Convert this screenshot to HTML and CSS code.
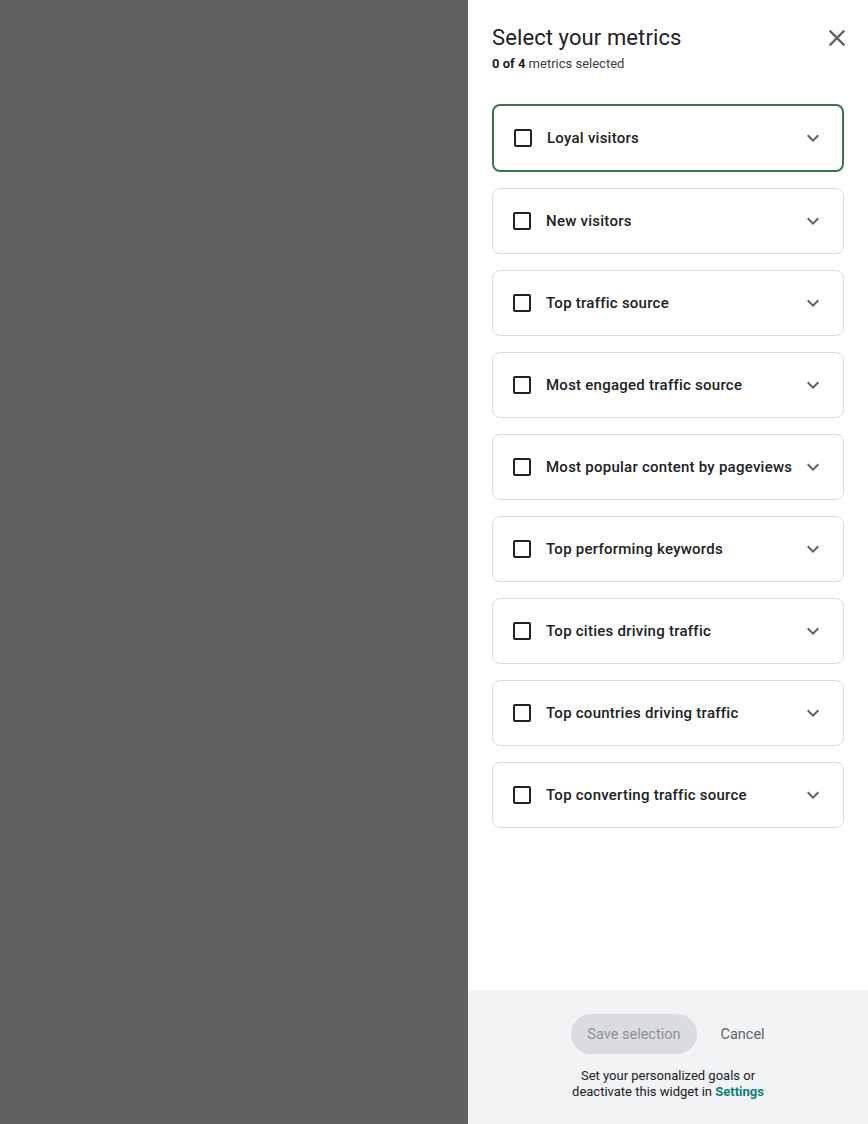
FILE: index.html
```html
<!DOCTYPE html>
<html lang="en">
<head>
<meta charset="utf-8">
<title>Select your metrics</title>
<link rel="stylesheet" href="styles.css">
</head>
<body>
<div class="screen">
  <div class="scrim"></div>
  <aside class="panel">
    <div class="panel-body">
      <header class="head">
        <div class="head-text">
          <h1 class="title">Select your metrics</h1>
          <p class="sub"><b>0 of 4</b> metrics selected</p>
        </div>
        <button class="close" aria-label="Close">
          <svg viewBox="0 0 24 24" width="28" height="28"><path fill="#5f6368" d="M19 6.41L17.59 5 12 10.59 6.41 5 5 6.41 10.59 12 5 17.59 6.41 19 12 13.41 17.59 19 19 17.59 13.41 12z"/></svg>
        </button>
      </header>
      <ul class="list">
        <li class="card focused"><span class="box"></span><span class="label">Loyal visitors</span><svg class="chev" viewBox="0 0 24 24" width="24" height="24"><path d="M16.59 8.59L12 13.17 7.41 8.59 6 10l6 6 6-6z"/></svg></li>
        <li class="card"><span class="box"></span><span class="label">New visitors</span><svg class="chev" viewBox="0 0 24 24" width="24" height="24"><path d="M16.59 8.59L12 13.17 7.41 8.59 6 10l6 6 6-6z"/></svg></li>
        <li class="card"><span class="box"></span><span class="label">Top traffic source</span><svg class="chev" viewBox="0 0 24 24" width="24" height="24"><path d="M16.59 8.59L12 13.17 7.41 8.59 6 10l6 6 6-6z"/></svg></li>
        <li class="card"><span class="box"></span><span class="label">Most engaged traffic source</span><svg class="chev" viewBox="0 0 24 24" width="24" height="24"><path d="M16.59 8.59L12 13.17 7.41 8.59 6 10l6 6 6-6z"/></svg></li>
        <li class="card"><span class="box"></span><span class="label">Most popular content by pageviews</span><svg class="chev" viewBox="0 0 24 24" width="24" height="24"><path d="M16.59 8.59L12 13.17 7.41 8.59 6 10l6 6 6-6z"/></svg></li>
        <li class="card"><span class="box"></span><span class="label">Top performing keywords</span><svg class="chev" viewBox="0 0 24 24" width="24" height="24"><path d="M16.59 8.59L12 13.17 7.41 8.59 6 10l6 6 6-6z"/></svg></li>
        <li class="card"><span class="box"></span><span class="label">Top cities driving traffic</span><svg class="chev" viewBox="0 0 24 24" width="24" height="24"><path d="M16.59 8.59L12 13.17 7.41 8.59 6 10l6 6 6-6z"/></svg></li>
        <li class="card"><span class="box"></span><span class="label">Top countries driving traffic</span><svg class="chev" viewBox="0 0 24 24" width="24" height="24"><path d="M16.59 8.59L12 13.17 7.41 8.59 6 10l6 6 6-6z"/></svg></li>
        <li class="card"><span class="box"></span><span class="label">Top converting traffic source</span><svg class="chev" viewBox="0 0 24 24" width="24" height="24"><path d="M16.59 8.59L12 13.17 7.41 8.59 6 10l6 6 6-6z"/></svg></li>
      </ul>
    </div>
    <footer class="foot">
      <div class="actions">
        <button class="save" disabled>Save selection</button>
        <button class="cancel">Cancel</button>
      </div>
      <p class="note">Set your personalized goals or<br>deactivate this widget in <a href="#" class="link">Settings</a></p>
    </footer>
  </aside>
</div>
</body>
</html>
```

FILE: styles.css
```css
* { box-sizing: border-box; }
html, body { margin: 0; padding: 0; }
body {
  font-family: Roboto, "Noto Sans", Arial, sans-serif;
  color: #202124;
  background: #616161;
}
.screen {
  display: flex;
  width: 868px;
  height: 1124px;
}
.scrim {
  flex: 0 0 468px;
  background: #616161;
}
.panel {
  flex: 0 0 400px;
  background: #fff;
  display: flex;
  flex-direction: column;
}
.panel-body {
  flex: 1;
  padding: 24px 24px 0 24px;
}
.head {
  display: flex;
  justify-content: space-between;
  align-items: flex-start;
}
.title {
  margin: 0;
  font-size: 22px;
  font-weight: 400;
  line-height: 28px;
  letter-spacing: 0.1px;
  color: #202124;
}
.sub {
  margin: 4px 0 0;
  font-size: 13px;
  line-height: 16px;
  color: #3c4043;
}
.sub b { font-weight: 700; color: #202124; }
.close {
  border: 0;
  background: none;
  padding: 0;
  margin: 0 -7px 0 0;
  width: 28px;
  height: 28px;
  cursor: pointer;
}
.close svg { display: block; }
.list {
  list-style: none;
  margin: 32px 0 0;
  padding: 0;
  display: flex;
  flex-direction: column;
  gap: 16px;
}
.card {
  display: flex;
  align-items: center;
  height: 66px;
  border: 1px solid #dadce0;
  border-radius: 8px;
  padding: 0 18px 0 20px;
}
.card.focused {
  height: 68px;
  border: 2px solid #3b7550;
  padding: 0 17px 0 20px;
}
.box {
  flex: 0 0 18px;
  width: 18px;
  height: 18px;
  border: 2px solid #202124;
  border-radius: 2px;
}
.label {
  flex: 1;
  margin-left: 15px;
  font-size: 15px;
  font-weight: 500;
  letter-spacing: 0.25px;
  color: #202124;
}
.chev { fill: #5f6368; flex: 0 0 24px; }
.foot {
  flex: 0 0 134px;
  background: #f1f3f4;
  display: flex;
  flex-direction: column;
  align-items: center;
  padding-top: 24px;
}
.actions {
  display: flex;
  align-items: center;
  gap: 8px;
  margin-left: 16px;
}
.save {
  height: 40px;
  padding: 0 16px;
  border: 0;
  border-radius: 20px;
  background: #dadce0;
  color: #8f9194;
  font-family: inherit;
  font-size: 14.5px;
}
.cancel {
  height: 40px;
  padding: 0 16px;
  border: 0;
  background: none;
  color: #5f6368;
  font-family: inherit;
  font-size: 14.5px;
}
.note {
  margin: 14px 0 0;
  text-align: center;
  font-size: 13px;
  line-height: 16px;
  color: #202124;
}
.link {
  color: #137d80;
  font-weight: 700;
  text-decoration: none;
}
```
